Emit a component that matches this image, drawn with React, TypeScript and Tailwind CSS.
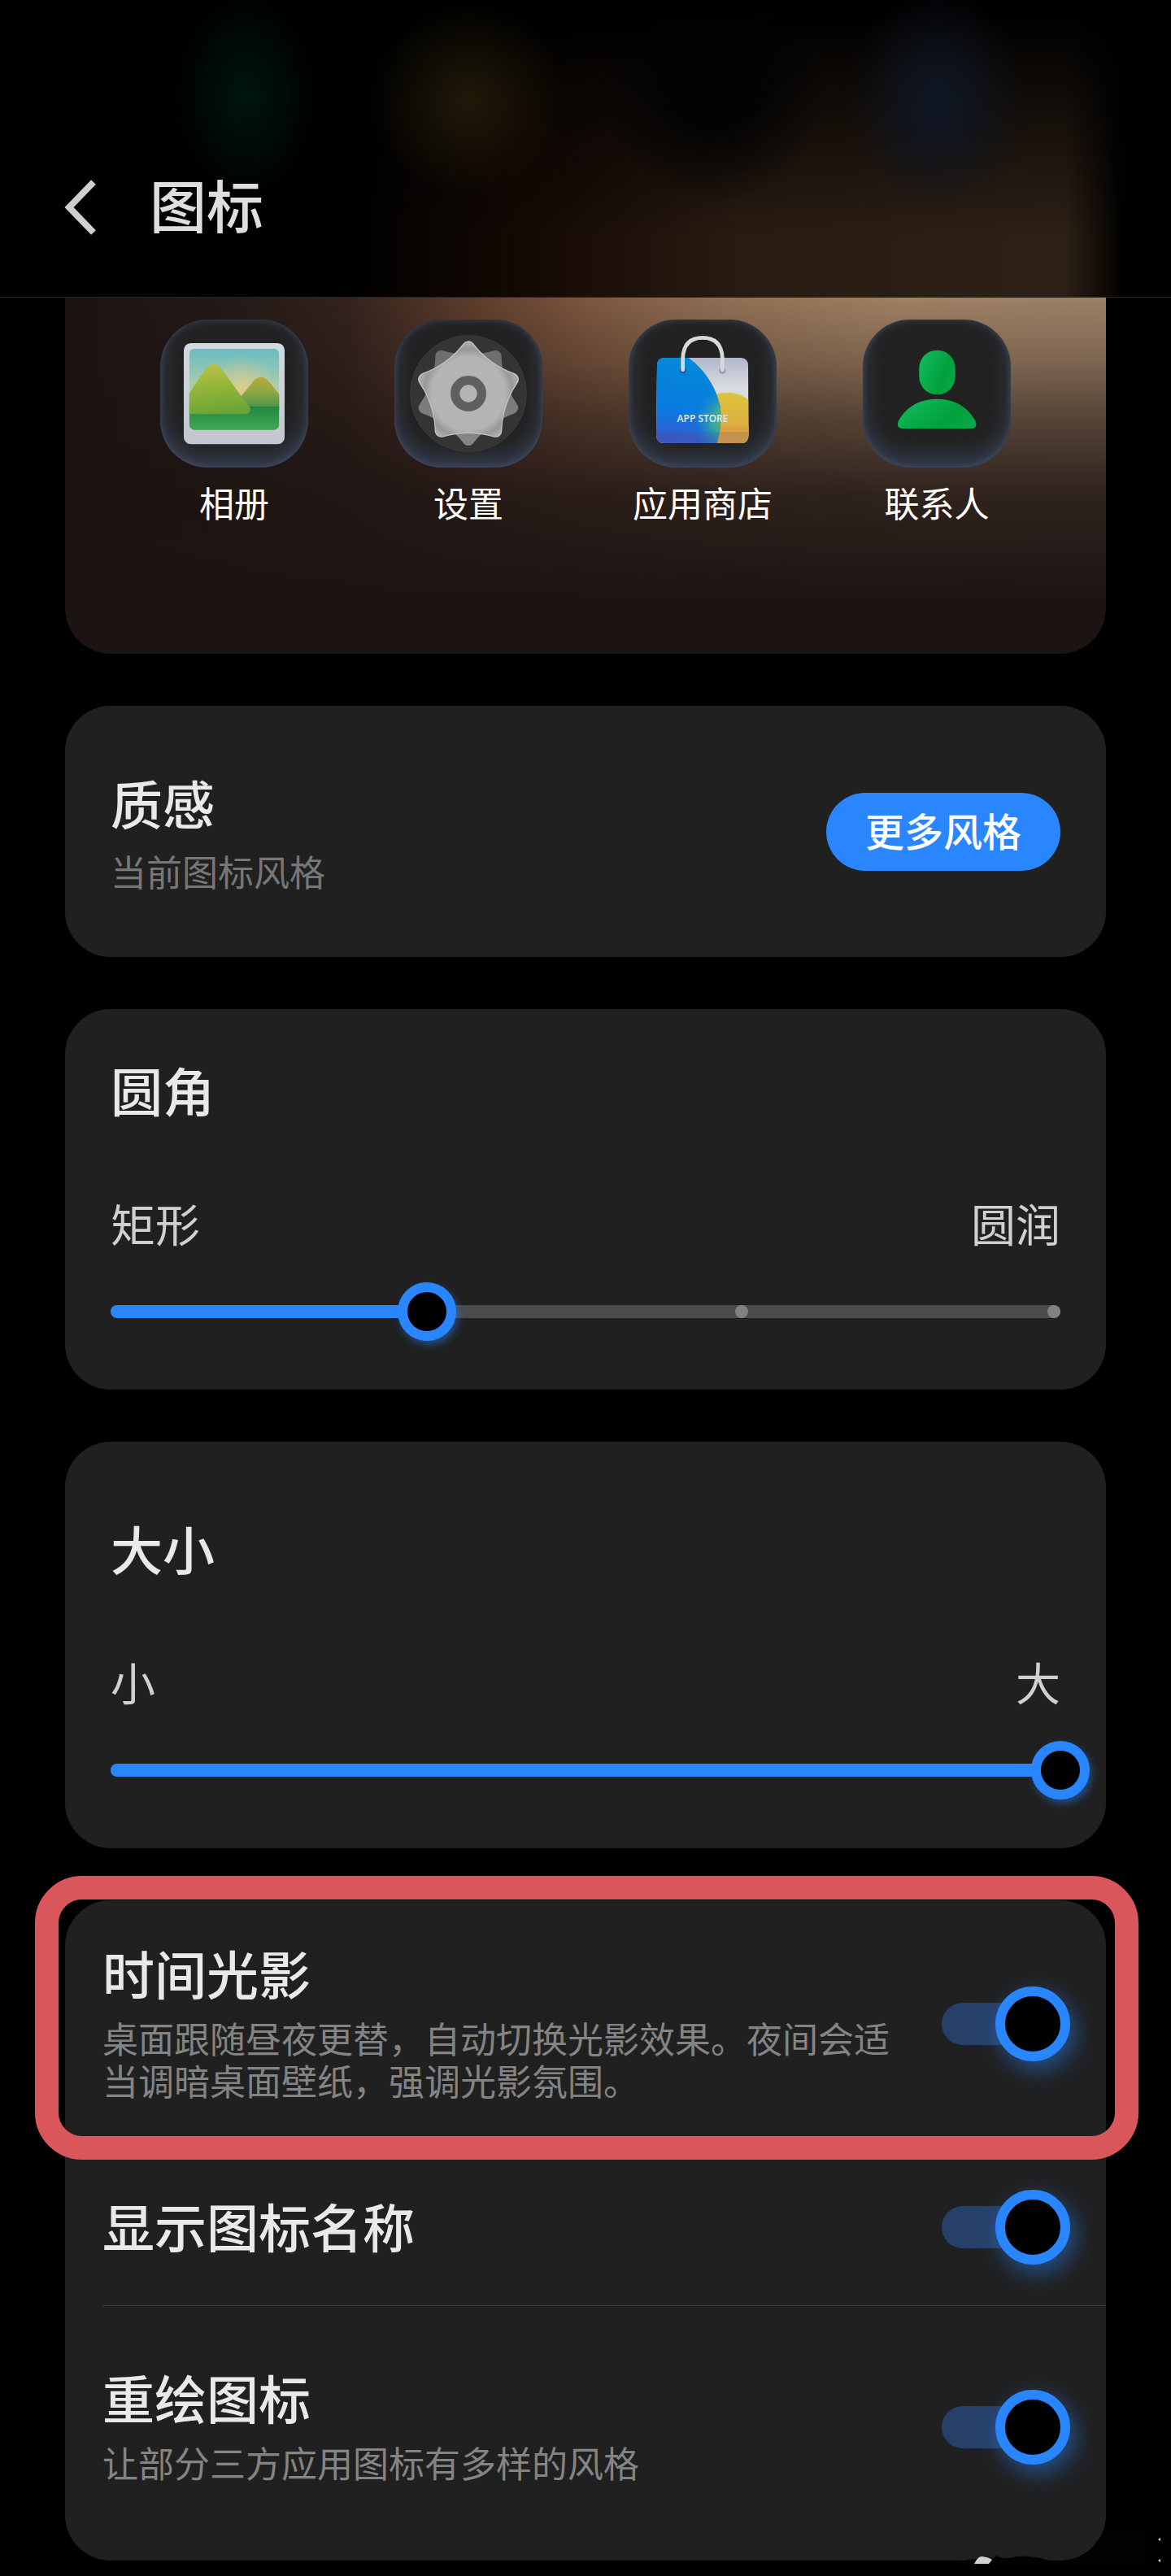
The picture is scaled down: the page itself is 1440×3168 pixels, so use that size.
import { useState } from "react";
import type { ReactNode } from "react";

function PhotosIcon() {
	return (
		<svg viewBox="27 27 546 546" className="size-full" aria-hidden="true">
			<defs>
				<linearGradient id="photo-frame" x1="0" y1="0" x2="0" y2="1">
					<stop offset="0" stopColor="#d3dbdf" />
					<stop offset="1" stopColor="#c3c5d0" />
				</linearGradient>
				<linearGradient id="photo-sky" x1="0" y1="0" x2="0" y2="1">
					<stop offset="0" stopColor="#69bcc3" />
					<stop offset="0.55" stopColor="#b9cfa4" />
				</linearGradient>
				<radialGradient id="photo-sun" cx="0.57" cy="0.5" r="0.4">
					<stop offset="0" stopColor="#dccb8e" />
					<stop offset="1" stopColor="#dccb8e" stopOpacity="0" />
				</radialGradient>
				<linearGradient id="photo-hill" x1="0.3" y1="0" x2="0.45" y2="1">
					<stop offset="0" stopColor="#bcc04c" />
					<stop offset="0.35" stopColor="#9cb83a" />
					<stop offset="1" stopColor="#6ba536" />
				</linearGradient>
				<linearGradient id="photo-hill-back" x1="0" y1="0" x2="0" y2="1">
					<stop offset="0" stopColor="#b5ac3a" />
					<stop offset="0.5" stopColor="#8ba544" />
					<stop offset="1" stopColor="#3f9149" />
				</linearGradient>
				<linearGradient id="photo-grass" x1="0" y1="0" x2="0" y2="1">
					<stop offset="0" stopColor="#218641" />
					<stop offset="1" stopColor="#43aa55" />
				</linearGradient>
				<clipPath id="photo-clip">
					<rect x="134" y="134" width="332" height="300" rx="20" />
				</clipPath>
			</defs>
			<rect x="114" y="114" width="372" height="373" rx="26" fill="url(#photo-frame)" />
			<g clipPath="url(#photo-clip)">
				<rect x="134" y="134" width="332" height="300" fill="url(#photo-sky)" />
				<rect x="134" y="134" width="332" height="300" fill="url(#photo-sun)" />
				<path
					d="M300 352 L326 310 L372 253 Q398 226 426 253 L470 308 V360 H300Z"
					fill="url(#photo-hill-back)"
				/>
				<rect x="134" y="348" width="332" height="90" fill="url(#photo-grass)" />
				<path
					d="M120 320 L196 207 Q224 176 252 207 L326 310 L358 352 Q364 372 340 376 H120Z"
					fill="url(#photo-hill)"
				/>
			</g>
		</svg>
	);
}

const STAR =
	"M300 130 Q363.5 212.6 461.7 247.5 Q402.7 333.4 399.9 437.5 Q300 408 200.1 437.5 Q197.3 333.4 138.3 247.5 Q236.5 212.6 300 130Z";

function SettingsIcon() {
	return (
		<svg
			viewBox="27 27 546 546"
			className="size-full"
			strokeLinejoin="round"
			aria-hidden="true"
		>
			<defs>
				<radialGradient
					id="gear-front"
					cx="300"
					cy="300"
					r="194"
					gradientUnits="userSpaceOnUse"
				>
					<stop offset="0.7" stopColor="#b4b4b4" />
					<stop offset="0.84" stopColor="#989898" />
					<stop offset="1" stopColor="#b4b4b4" />
				</radialGradient>
				<linearGradient id="gear-back" x1="0" y1="0" x2="0" y2="1">
					<stop offset="0" stopColor="#858585" />
					<stop offset="1" stopColor="#6e6e6e" />
				</linearGradient>
			</defs>
			<circle cx="300" cy="300" r="214" fill="#343434" stroke="#424242" strokeWidth="2" />
			<path
				d={STAR}
				transform="rotate(180 300 300)"
				fill="#777777"
				stroke="url(#gear-back)"
				strokeWidth="44"
			/>
			<path d={STAR} fill="#c9c9c9" stroke="#c9c9c9" strokeWidth="48" />
			<path d={STAR} fill="url(#gear-front)" stroke="url(#gear-front)" strokeWidth="41" />
			<circle cx="300" cy="300" r="49" fill="none" stroke="#5f5f5f" strokeWidth="34" />
		</svg>
	);
}

function StoreIcon() {
	return (
		<svg viewBox="27 27 546 546" className="size-full" aria-hidden="true">
			<defs>
				<linearGradient id="bag-body" x1="0" y1="0" x2="0" y2="1">
					<stop offset="0" stopColor="#aeb5c8" />
					<stop offset="0.35" stopColor="#d9dade" />
					<stop offset="1" stopColor="#d9dade" />
				</linearGradient>
				<linearGradient id="bag-blue" x1="0.5" y1="0" x2="0.4" y2="1">
					<stop offset="0" stopColor="#058ad6" />
					<stop offset="0.6" stopColor="#087be0" />
					<stop offset="1" stopColor="#3a58d0" />
				</linearGradient>
				<linearGradient id="bag-yellow" x1="0" y1="0" x2="0" y2="1">
					<stop offset="0" stopColor="#dcc23c" />
					<stop offset="0.6" stopColor="#deaa40" />
					<stop offset="1" stopColor="#dc9c48" />
				</linearGradient>
				<radialGradient
					id="bag-mix"
					cx="395"
					cy="400"
					r="130"
					gradientUnits="userSpaceOnUse"
				>
					<stop offset="0" stopColor="#6fb46a" />
					<stop offset="0.45" stopColor="#35a99c" />
					<stop offset="1" stopColor="#1787d8" stopOpacity="0" />
				</radialGradient>
				<clipPath id="bag-clip">
					<path d="M160 168 H440 Q468 168 468 198 L470 452 Q470 483 440 483 H160 Q129 483 129 452 L132 198 Q132 168 160 168Z" />
				</clipPath>
				<clipPath id="bag-blue-clip">
					<path d="M100 160 H235 C310 205 368 300 368 385 Q368 440 350 490 H100Z" />
				</clipPath>
			</defs>
			<g clipPath="url(#bag-clip)">
				<rect x="125" y="160" width="350" height="330" fill="url(#bag-body)" />
				<circle cx="392" cy="418" r="122" fill="url(#bag-yellow)" />
				<rect x="340" y="420" width="140" height="70" fill="#dea444" />
				<g clipPath="url(#bag-blue-clip)">
					<rect x="125" y="160" width="250" height="330" fill="url(#bag-blue)" />
					<rect x="125" y="160" width="250" height="330" fill="url(#bag-mix)" />
				</g>
				<rect x="125" y="442" width="350" height="48" fill="#5b4a7a" fillOpacity="0.2" />
			</g>
			<circle cx="227" cy="215" r="12" fill="#1a5fae" />
			<circle cx="373" cy="215" r="12" fill="#8f9cba" />
			<path
				d="M227 212 V168 Q231 94 300 94 Q369 94 373 168 V212"
				fill="none"
				stroke="#d9d9dc"
				strokeWidth="14"
				strokeLinecap="round"
			/>
			<text
				x="300"
				y="405"
				textAnchor="middle"
				fill="#d5e6ee"
				className="font-['Noto_Sans',sans-serif] text-[36px] font-semibold"
			>
				APP STORE
			</text>
		</svg>
	);
}

function ContactsIcon() {
	return (
		<svg viewBox="27 27 546 546" className="size-full" aria-hidden="true">
			<defs>
				<linearGradient id="contact" x1="0" y1="0.2" x2="1" y2="0.7">
					<stop offset="0" stopColor="#0fbb5c" />
					<stop offset="0.7" stopColor="#02a03b" />
					<stop offset="1" stopColor="#08a847" />
				</linearGradient>
			</defs>
			<rect x="235" y="140" width="133" height="164" rx="66" fill="url(#contact)" />
			<path
				d="M172 429 Q148 426 159 400 Q205 320 301 320 Q396 320 442 400 Q452 426 430 429Z"
				fill="url(#contact)"
			/>
		</svg>
	);
}

const apps = [
	{ name: "相册", icon: <PhotosIcon /> },
	{ name: "设置", icon: <SettingsIcon /> },
	{ name: "应用商店", icon: <StoreIcon /> },
	{ name: "联系人", icon: <ContactsIcon /> },
];

function Card({ children, className = "" }: { children: ReactNode; className?: string }) {
	return (
		<section className={`rounded-[56px] bg-[#202020] px-14 ${className}`}>{children}</section>
	);
}

type SliderProps = {
	label: string;
	min: string;
	max: string;
	initial: number;
	showStops?: boolean;
};

function SliderSetting({ label, min, max, initial, showStops }: SliderProps) {
	const [value, setValue] = useState(initial);

	return (
		<>
			<h2 className="text-[64px] leading-[76px] font-medium text-[#e9e9e9]">{label}</h2>
			<div className="mt-[94px] flex justify-between text-[55px] leading-[64px] text-[#d0d0d0]">
				<span>{min}</span>
				<span>{max}</span>
			</div>
			<div className="mt-[42px] grid items-center *:[grid-area:1/1]">
				<div className="h-4 rounded-full bg-[#4b4b4b]" />
				{showStops && (
					<div className="grid grid-cols-3 justify-items-end pl-4">
						<span />
						<span className="size-4 rounded-full bg-[#828282]" />
						<span className="size-4 rounded-full bg-[#828282]" />
					</div>
				)}
				<div
					className="h-4 rounded-full bg-[#2a86ff]"
					style={{ width: `${(value / 3) * 100}%` }}
				/>
				<input
					type="range"
					aria-label={label}
					min={0}
					max={3}
					step={1}
					value={value}
					onChange={(e) => setValue(Number(e.target.value))}
					className="-mx-9 h-[72px] appearance-none bg-transparent [&::-webkit-slider-thumb]:size-[72px] [&::-webkit-slider-thumb]:appearance-none [&::-webkit-slider-thumb]:rounded-full [&::-webkit-slider-thumb]:border-12 [&::-webkit-slider-thumb]:border-[#2a86ff] [&::-webkit-slider-thumb]:bg-black [&::-webkit-slider-thumb]:shadow-[3px_5px_10px_rgba(42,134,255,0.45)]"
				/>
			</div>
		</>
	);
}

type ToggleProps = {
	label: string;
	description?: string;
	className: string;
};

function ToggleSetting({ label, description, className }: ToggleProps) {
	const [on, setOn] = useState(true);

	return (
		<label className={`flex items-center justify-between pr-11 ${className}`}>
			<span className="flex max-w-[970px] flex-col gap-[17px] pb-1.5">
				<span className="text-[64px] leading-[76px] font-medium text-[#e9e9e9]">{label}</span>
				{description && (
					<span className="text-[44px] leading-[52px] text-[#848484]">{description}</span>
				)}
			</span>
			<input
				type="checkbox"
				role="switch"
				checked={on}
				onChange={(e) => setOn(e.target.checked)}
				className="-my-2 grid h-[92px] w-[158px] shrink-0 appearance-none items-center before:h-13 before:w-[136px] before:rounded-full before:bg-[#3a3a3a] before:[grid-area:1/1] after:size-[92px] after:rounded-full after:border-12 after:border-[#777777] after:bg-black after:[grid-area:1/1] checked:before:bg-[#264068] checked:after:justify-self-end checked:after:border-[#2a86ff] checked:after:shadow-[6px_10px_28px_rgba(42,134,255,0.5)]"
			/>
		</label>
	);
}

export default function App() {
	return (
		<div className="relative min-h-screen overflow-hidden bg-black pb-5 font-['Noto_Sans_CJK_SC',sans-serif]">
			<header className="flex items-center gap-[66px] border-b border-[#242424] bg-[radial-gradient(90px_130px_at_21%_32%,#00160c,transparent),radial-gradient(120px_120px_at_40%_34%,#201909,transparent),radial-gradient(140px_150px_at_61%_28%,#020203_30%,transparent),radial-gradient(110px_140px_at_80%_34%,#0f1623_10%,transparent),linear-gradient(to_right,transparent_91%,#000000_96%),linear-gradient(to_bottom,#000000_5%,rgba(0,0,0,0.6)_35%,transparent_80%),linear-gradient(to_right,#000000_30%,#160a04_46%,#281b11_63%,#2d2015_88%)] pt-[198px] pb-[53px] pl-[78px]">
				<button type="button" aria-label="返回">
					<svg
						viewBox="0 0 40 68"
						className="h-17 w-10"
						fill="none"
						stroke="#cfcfcf"
						strokeWidth="8"
						aria-hidden="true"
					>
						<path d="M37 3 L7 34 L37 65" />
					</svg>
				</button>
				<h1 className="pb-2 text-[70px] leading-[106px] font-medium text-[#dedede]">图标</h1>
			</header>

			<main className="flex flex-col gap-16 px-20">
				{/* wallpaper preview */}
				<ul className="grid grid-cols-4 rounded-b-[56px] bg-[linear-gradient(to_bottom,transparent,rgba(29,20,18,0.25)_18%,rgba(29,20,18,0.56)_34%,rgba(29,20,18,0.86)_55%,#1c1413_85%),linear-gradient(to_right,#1b1312,#231917_15%,#33221d_27%,#5f3f2d_40%,#7b563e_50%,#8e6d52_62%,#9e8063_80%,#9c8066)] px-16 pt-[27px] pb-[157px]">
					{apps.map((app) => (
						<li key={app.name} className="flex flex-col items-center gap-3">
							<div className="size-[182px] overflow-hidden rounded-[58px] bg-[#222222] shadow-[inset_0_-12px_26px_rgba(88,116,170,0.36),inset_0_0_8px_rgba(120,130,160,0.35)]">
								{app.icon}
							</div>
							<span className="text-[43px] leading-[60px] text-white">{app.name}</span>
						</li>
					))}
				</ul>

				<Card className="flex items-center justify-between py-20">
					<div>
						<h2 className="text-[64px] leading-[76px] font-medium text-[#e9e9e9]">质感</h2>
						<p className="mt-[21px] text-[44px] leading-[52px] text-[#777777]">当前图标风格</p>
					</div>
					<button
						type="button"
						className="h-24 rounded-full bg-[#2a86ff] px-12 pb-1.5 text-[48px] leading-[60px] font-medium text-white"
					>
						更多风格
					</button>
				</Card>

				<Card className="py-[60px]">
					<SliderSetting label="圆角" min="矩形" max="圆润" initial={1} showStops />
				</Card>

				<Card className="pt-[92px] pb-[60px]">
					<SliderSetting label="大小" min="小" max="大" initial={3} />
				</Card>

				<section className="relative rounded-[56px] bg-[#202020] pb-4 pl-[46px]">
					<ToggleSetting
						label="时间光影"
						description="桌面跟随昼夜更替，自动切换光影效果。夜间会适当调暗桌面壁纸，强调光影氛围。"
						className="pt-[50px] pb-[47px]"
					/>
					<ToggleSetting label="显示图标名称" className="pt-[61px] pb-[55px]" />
					<hr className="border-[#3a3a3a]" />
					<ToggleSetting
						label="重绘图标"
						description="让部分三方应用图标有多样的风格"
						className="py-[73px]"
					/>
					{/* highlight drawn round the first row */}
					<div className="pointer-events-none absolute top-[-30px] -right-10 left-[-37px] h-[349px] rounded-[58px] border-29 border-[#d9575b]" />
				</section>
			</main>

			{/* brush marks in the corner */}
			<svg
				viewBox="0 0 270 70"
				className="absolute right-0 bottom-0 h-[70px] w-[270px]"
				aria-hidden="true"
			>
				<path
					d="M12 51 Q22 47 34 49 Q46 52 56 44 Q66 50 80 45 Q100 44 116 49 Q140 53 158 45 Q174 38 178 27 Q186 20 190 14 H240 V56 H12Z"
					fill="#020202"
				/>
				<path d="M28 54 Q33 44 38 45 Q46 46 50 49 L46 54Z" fill="#d0d0d0" />
				<path d="M254 24 l3 -2 v4z M254 50 l3 -2 v4z" fill="#dddddd" />
			</svg>
		</div>
	);
}
